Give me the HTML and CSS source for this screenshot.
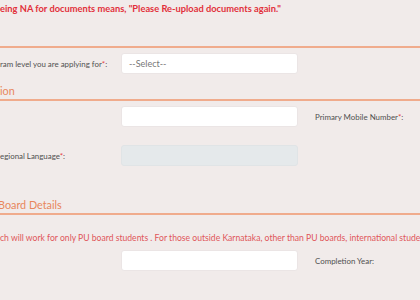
FILE: index.html
```html
<!DOCTYPE html>
<html lang="en">
<head>
<meta charset="utf-8">
<title>Application Form</title>
<link rel="stylesheet" href="styles.css">
</head>
<body>
<div class="page">
  <p class="alert">eing NA for documents means, "Please Re-upload documents again."</p>
  <div class="rule"></div>
  <div class="row first">
    <label class="label">ram level you are applying for<span class="req">*</span>:</label>
    <div class="field select">--Select--</div>
  </div>
  <h2 class="section">ion</h2>
  <div class="row tight">
    <span class="label"></span>
    <div class="field"></div>
    <label class="label side">Primary Mobile Number<span class="req">*</span>:</label>
  </div>
  <div class="row loose">
    <label class="label">egional Language<span class="req">*</span>:</label>
    <div class="field disabled"></div>
  </div>
  <h2 class="section board">Board Details</h2>
  <p class="note">ch will work for only PU board students . For those outside Karnataka, other than PU boards, international students</p>
  <div class="row">
    <span class="label"></span>
    <div class="field"></div>
    <label class="label side">Completion Year:</label>
  </div>
</div>
</body>
</html>
```

FILE: styles.css
```css
html, body {
  margin: 0;
  padding: 0;
  background: #f1ebea;
}
body {
  font-family: Lato, "Open Sans", "Liberation Sans", sans-serif;
  color: #555;
  overflow: hidden;
  width: 420px;
  height: 300px;
}
.page {
  display: flex;
  flex-direction: column;
}
.alert {
  margin: 0;
  font-size: 9.3px;
  font-weight: 700;
  line-height: 18px;
  color: #e2303a;
  white-space: nowrap;
}
.rule {
  margin-top: 28px;
  border-top: 2px solid #f0ab8c;
}
.row {
  display: grid;
  grid-template-columns: 121px 177px 1fr;
  align-items: center;
  margin-top: 5px;
}
.row.first { margin-top: 5px; }
.row.loose { margin-top: 18px; }
.label {
  font-size: 7.9px;
  color: #505050;
  white-space: nowrap;
}
.label.side {
  padding-left: 17px;
}
.req {
  color: #e53a3a;
}
.field {
  height: 21px;
  box-sizing: border-box;
  background: #fff;
  border: 1px solid #ebe5e5;
  border-radius: 3px;
}
.select {
  display: flex;
  align-items: center;
  padding-left: 7px;
  font-size: 9px;
  color: #777;
}
.disabled {
  background: #e5e9eb;
  border-color: #e0e4e6;
}
.section {
  margin: 9px 0 0;
  font-size: 10.8px;
  font-weight: 400;
  line-height: 15px;
  padding-bottom: 1px;
  color: #e8865c;
  border-bottom: 2px solid #f0ab8c;
  white-space: nowrap;
}
.section.board {
  margin-top: 31px;
  text-indent: -2px;
}
.note {
  margin: 16px 0 0;
  font-size: 8.6px;
  line-height: 14px;
  color: #e0565a;
  white-space: nowrap;
}
```
